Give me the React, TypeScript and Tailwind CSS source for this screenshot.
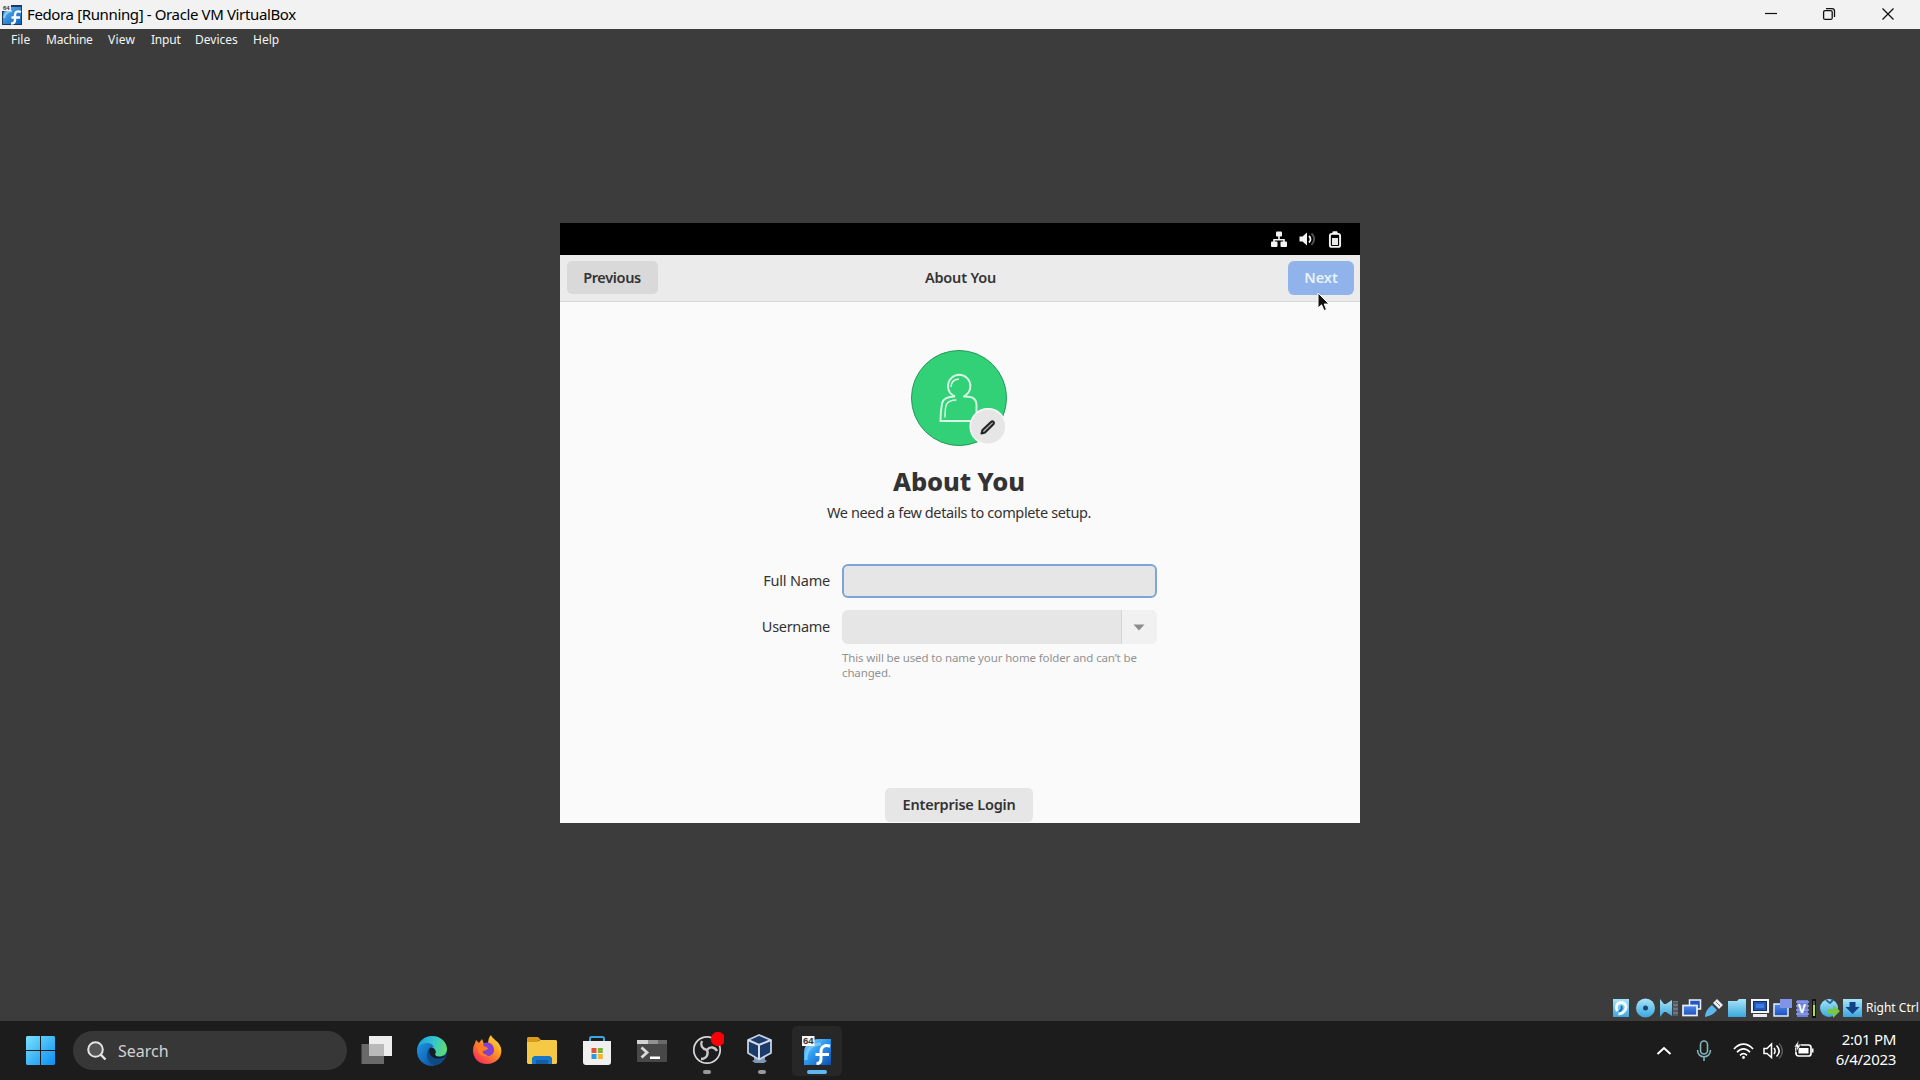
import React from 'react';

const uiFont = "font-['Noto_Sans',sans-serif]";

function FedoraIcon({ size, id }: { size: number; id: string }) {
  return (
    <svg width={size} height={size} viewBox="0 0 30 30">
      <defs>
        <linearGradient id={id} x1="0" y1="0" x2="1" y2="1">
          <stop offset="0" stopColor="#8fdcff" />
          <stop offset="0.45" stopColor="#2f9af0" />
          <stop offset="1" stopColor="#0b4fae" />
        </linearGradient>
      </defs>
      <path d="M2 29V17C2 8 9 3 17 3h12v26z" fill={`url(#${id})`} />
      <path d="M4 24C4 13 10 8 19 8" fill="none" stroke="#7fd0fc" strokeWidth="3" opacity=".75" />
      <path d="M28 10.200c-5.500-1.700-9 .5-9 5.300v7.500c0 3-1.500 4.500-4.500 4.500M13.500 18.500H27" fill="none" stroke="#fff" strokeWidth="3" />
      <rect x="0" y="0" width="12.500" height="10" fill="#f7f7f7" />
      <text x="1" y="8.300" fontSize="9.500" fontWeight="800" fontFamily="Liberation Sans, sans-serif" fill="#333">64</text>
    </svg>
  );
}

function TitleBar() {
  return (
    <header className="flex h-[29px] items-center bg-[#f2f2f2] pl-[2px] text-black">
      <svg width="20" height="20" viewBox="0 0 20 20">
        <defs>
          <linearGradient id="ttl" x1="0" y1="0" x2="1" y2="1">
            <stop offset="0" stopColor="#5fb4f0" />
            <stop offset="1" stopColor="#0d62bf" />
          </linearGradient>
        </defs>
        <rect width="20" height="20" fill="#1d3a5c" />
        <path d="M1 19v-8C1 4 6 2 12 2h7v17z" fill="url(#ttl)" />
        <path d="M2 13C3 8 6 6 10 6" fill="none" stroke="#8ed2fa" strokeWidth="2" />
        <path d="M19 7c-4-1.500-6 0-6 3v5c0 2-1.500 3.500-4 3.500M9.500 12.500H18" fill="none" stroke="#fff" strokeWidth="2.400" />
        <rect width="9" height="6" fill="#eee" />
        <text x="1" y="5.200" fontSize="6" fontWeight="800" fontFamily="Liberation Sans, sans-serif" fill="#333">64</text>
      </svg>
      <span className="mb-[2px] ml-[5px] whitespace-nowrap text-[15px] leading-[20px] tracking-[-0.370px]">Fedora [Running] - Oracle VM VirtualBox</span>
      <div className="ml-auto flex">
        <svg width="60" height="29" viewBox="0 0 60 29" stroke="#111" strokeWidth="1.200"><path d="M24 13.500h12" /></svg>
        <svg width="57" height="29" viewBox="0 0 57 29" fill="none" stroke="#111" strokeWidth="1.300">
          <rect x="22.600" y="10.600" width="8.600" height="8.800" rx="1.500" />
          <path d="M25 8.600h6a2.500 2.500 0 0 1 2.500 2.500v6" />
        </svg>
        <svg width="62" height="29" viewBox="0 0 62 29" stroke="#111" strokeWidth="1.300"><path d="m24.500 8.500 11 11m0-11-11 11" /></svg>
      </div>
    </header>
  );
}

function MenuBar() {
  return (
    <nav className="flex h-[22px] items-center gap-[15px] pl-[11px] text-[12px] leading-[16px] text-[#f4f4f4]">
      <span className="w-[20px]">File</span>
      <span className="w-[47px] tracking-[-0.200px]">Machine</span>
      <span className="w-[28px] tracking-[0.200px]">View</span>
      <span className="w-[29px] tracking-[-0.200px]">Input</span>
      <span className="w-[43px]">Devices</span>
      <span>Help</span>
    </nav>
  );
}

function GuestTopBar() {
  return (
    <div className="flex h-[32px] items-center justify-end gap-[11px] bg-black pr-[17px]">
      <svg width="17" height="17" viewBox="0 0 17 17" fill="#f4f4f4">
        <rect x="5" y="0.500" width="6" height="5" rx="1" />
        <rect x="0" y="10.500" width="6.500" height="5.500" rx="1" />
        <rect x="9.500" y="10.500" width="6.500" height="5.500" rx="1" />
        <path d="M7.200 5h1.600v3h5v3.500h-1.600v-2H3.800v2H2.200V8h5z" />
      </svg>
      <svg width="17" height="17" viewBox="0 0 17 17" fill="none">
        <path d="M0.500 5.500h3L8 1.500v13l-4.500-4h-3z" fill="#f4f4f4" />
        <path d="M10 5c2 1.800 2 4.500 0 6.500" stroke="#f4f4f4" strokeWidth="1.800" />
        <path d="M12.500 2.500c3.500 3.500 3.500 7.500 0 11.500" stroke="#555" strokeWidth="1.800" />
      </svg>
      <svg width="16" height="17" viewBox="0 0 16 17">
        <rect x="2.900" y="2.900" width="10.200" height="13" rx="2" fill="none" stroke="#f4f4f4" strokeWidth="1.900" />
        <rect x="5.500" y="0.300" width="5" height="3" rx="1" fill="#f4f4f4" />
        <rect x="5" y="7" width="6" height="7" fill="#e8e8e8" />
      </svg>
    </div>
  );
}

function GuestHeader() {
  return (
    <div className="relative grid h-[47px] grid-cols-[91px_1fr_66px] items-start border-b border-[#d8d8d8] bg-[#ebebeb] pl-[7px] pr-[6px] pt-[6px] text-[14.500px] font-semibold leading-[33px] text-[#333]">
      <button className="h-[33px] rounded-[5px] bg-[#d9d9d9] pr-[1px] tracking-[-0.350px]">Previous</button>
      <span className="pr-[25px] text-center tracking-[-0.200px]">About You</span>
      <button className="h-[34px] rounded-[6px] bg-[#8fb3ea] pb-[2px] leading-[32px] text-[#e9f1fc]">Next</button>
      <svg className="absolute left-[757px] top-[37px]" width="14" height="20" viewBox="0 0 14 20">
        <path d="M1 1v15l3.600-3.200L7 18.500l2.500-1-2.300-5.500H12z" fill="#111" stroke="#fff" strokeWidth="1" />
      </svg>
    </div>
  );
}

function Avatar() {
  return (
    <svg width="100" height="100" viewBox="0 0 100 100">
      <circle cx="50" cy="50" r="47.500" fill="#32d177" stroke="#229a58" strokeWidth="1" />
      <g fill="none" stroke="#d7f8e4" strokeWidth="1.900">
        <path d="M46 48.500C41.500 46.500 39 42.500 39 38a11.200 11.200 0 0 1 22.400 0c0 4.500-2.900 8.500-6.900 10.500 9 0 12.500 1.500 13 8V73H31.500c0-6 .5-12 1.500-17.500 1-5 5-7 13-7z" />
        <path d="M42 39c0-4.500 3-7.500 8-8M36 69.500c0-12 .5-17.500 11.500-17.500" strokeWidth="1.500" />
      </g>
      <circle cx="79" cy="78.500" r="17.800" fill="#e6e6e6" stroke="#fafafa" strokeWidth="1.500" />
      <path d="m73.500 82 8.800-8.300a1.600 1.600 0 0 1 2.300 2.200L76 84.500l-3.500 1z" fill="#b5b5b5" stroke="#252525" strokeWidth="2.100" strokeLinejoin="round" />
    </svg>
  );
}

function SetupWindow() {
  return (
    <section className="mx-auto mt-[172px] flex h-[600px] w-[800px] flex-col overflow-hidden bg-[#fafafa] text-[#333]">
      <GuestTopBar />
      <GuestHeader />
      <main className="flex flex-1 flex-col items-center pr-[2px] pt-[46px]">
        <Avatar />
        <h1 className="mb-[1px] mt-[17px] text-[25.500px] font-extrabold leading-[32px] tracking-[-0.150px]">About You</h1>
        <p className="mt-[4px] whitespace-nowrap text-[14.500px] leading-[20px] tracking-[-0.370px]">We need a few details to complete setup.</p>
        <form className="mt-[42px] grid grid-cols-[90px_315px] gap-x-[12px] pr-[21px]">
          <label className="text-right text-[14.500px] leading-[32px] tracking-[-0.200px]">Full Name</label>
          <div className="h-[34px] rounded-[6px] border-2 border-[#7da5d8] bg-[#e6e6e6]" />
          <label className="mt-[12px] text-right text-[14.500px] leading-[32px] tracking-[-0.300px]">Username</label>
          <div className="mt-[12px] flex h-[34px] overflow-hidden rounded-[6px] bg-[#e6e6e6]">
            <div className="ml-auto flex w-[36px] items-center justify-center border-l border-[#d5d5d5] bg-[#f1f1f1] pr-[1px]">
              <svg width="12" height="7" viewBox="0 0 12 7"><path d="M0.500 0.500h11L6 6.500z" fill="#8c8c8c" /></svg>
            </div>
          </div>
          <p className="col-start-2 mt-[6px] whitespace-nowrap text-[11.500px] leading-[15px] tracking-[-0.130px] text-[#929292]">This will be used to name your home folder and can’t be<br />changed.</p>
        </form>
        <button className="mb-[1px] mt-auto h-[34px] w-[148px] rounded-[5px] bg-[#e6e6e6] text-[14.500px] font-semibold tracking-[-0.200px]">Enterprise Login</button>
      </main>
    </section>
  );
}

function StatusBar() {
  return (
    <footer className="mt-auto flex h-[27px] items-center justify-end text-[12px] text-white">
      <svg width="254" height="22" viewBox="0 0 254 22">
        <defs>
          <linearGradient id="sky" x1="0" y1="0" x2="0" y2="1"><stop offset="0" stopColor="#a9e4f8" /><stop offset="1" stopColor="#3aa7df" /></linearGradient>
          <linearGradient id="blu" x1="0" y1="0" x2="0" y2="1"><stop offset="0" stopColor="#4f8ce8" /><stop offset="1" stopColor="#1c4fc0" /></linearGradient>
        </defs>
        <rect x="4" y="2" width="16" height="18" fill="url(#sky)" />
        <path d="M8.500 14C6 10 8 5.500 12 5.500c5 0 6.500 5 3.500 8.500-1.500 2-4 3-6 3" fill="none" stroke="#f4fbff" strokeWidth="2.800" />
        <path d="M12 9c1.500 1.500 1 4-2 5.500" fill="none" stroke="#1d6bc0" strokeWidth="1.900" />
        <circle cx="36.500" cy="11" r="9.500" fill="url(#sky)" /><circle cx="36.500" cy="11" r="2.500" fill="#164577" />
        <path d="M51 2l4 5h2l6-4v16l-6-4h-2l-4 5z" fill="url(#sky)" />
        <path d="M64 4h5v15h-5z" fill="#6b7880" /><path d="M63 6h6m-6 4h6m-6 4h6m-6 4h6" stroke="#48525a" strokeWidth="1.300" />
        <rect x="80.500" y="3" width="11" height="9" fill="#2457bd" stroke="#e9f0fb" strokeWidth="1.500" />
        <rect x="74" y="8.500" width="14" height="10" fill="url(#blu)" stroke="#e9f0fb" strokeWidth="1.700" />
        <path d="M96 20c0-5 3-9 7-12l5 5c-3 4-7 6-12 7z" fill="#5cb7ee" /><path d="M104 6l4-4 6 6-4 4z" fill="#e8eef2" /><path d="M107 5l4 4" stroke="#777" />
        <path d="M119 4h9l2-2h7v18h-18z" fill="url(#sky)" />
        <rect x="142" y="2" width="18" height="14" fill="#f3f6fb" /><rect x="144.500" y="4.500" width="13" height="9" fill="#2459b9" stroke="#102c67" /><path d="M147 7h8v4h-8z" fill="#3d7ddc" /><path d="M144 17h14v3h-14z" fill="#e8edf3" />
        <rect x="165" y="7" width="14" height="12" fill="url(#blu)" stroke="#e3ecfb" strokeWidth="1.500" /><rect x="171" y="2" width="12" height="9" fill="#8095e8" />
        <path d="M188 3h11v17h-11z" fill="#6c7fd5" /><path d="M187 5h13m-13 4h13m-13 4h13m-13 4h13" stroke="#8c9ce9" strokeWidth="1.500" /><text x="189" y="15.500" fontSize="12" fontWeight="700" fontFamily="Noto Sans, sans-serif" fill="white">V</text>
        <rect x="203" y="2" width="4" height="19" fill="#111" /><path d="M204 8h2v11h-2z" fill="#b4df35" /><path d="M204 4h2v4h-2z" fill="#555" />
        <circle cx="220" cy="11" r="9" fill="url(#sky)" /><path d="M217 3l4 3 3-3" stroke="#26679b" strokeWidth="2" fill="none" /><path d="M219 12h5V8l7 6-7 7v-4h-5z" fill="#75c944" />
        <rect x="234" y="2" width="19" height="18" fill="url(#sky)" />
        <path d="M240.500 5h6v5h4l-7 7-7-7h4z" fill="#123f86" />
      </svg>
      <span className="ml-[3px] w-[54px] whitespace-nowrap">Right Ctrl</span>
    </footer>
  );
}

function AppSlot({ children, mark = '' }: { children: React.ReactNode; mark?: string }) {
  return (
    <div className="relative flex h-[59px] w-[55px] shrink-0 items-center justify-center">
      {children}
      {mark === 'idle' && <span className="absolute bottom-[6px] left-[24px] h-[4px] w-[8px] rounded-full bg-[#999]" />}
      {mark === 'active' && <span className="absolute bottom-[6px] left-[17px] h-[4px] w-[20px] rounded-full bg-[#5bb9f0]" />}
    </div>
  );
}

function Taskbar() {
  return (
    <footer className="flex h-[59px] items-center bg-[#1c1c1c] pl-[26px]">
      <svg width="29" height="29" viewBox="0 0 29 29">
        <defs><linearGradient id="win" x1="0" y1="0" x2="1" y2="1"><stop offset="0" stopColor="#79e2fd" /><stop offset="1" stopColor="#0b8df2" /></linearGradient></defs>
        <path d="M1 0h13v14H0V1zM15 0h13l1 1v13H15zM0 15h14v14H1l-1-1zM15 15h14v13l-1 1H15z" fill="url(#win)" />
      </svg>
      <div className="ml-[18px] mr-[2px] flex h-[39px] w-[274px] items-center rounded-full bg-[#373737] pl-[14px] text-[16px] text-[#d2d2d2]">
        <svg width="20" height="20" viewBox="0 0 20 20" fill="none" stroke="#e4e4e4" strokeWidth="2"><circle cx="8.500" cy="8.500" r="7.300" fill="#555" /><path d="m13.700 13.700 4.800 4.800" strokeWidth="2.400" /></svg>
        <span className="ml-[11px]">Search</span>
      </div>

      <AppSlot>
        <svg className="-mt-[1px]" width="31" height="29" viewBox="0 0 31 29"><path d="M8 0h23v20H8z" fill="#ededed" /><path d="M0.500 8h22.500v20H0.500z" fill="#777" opacity=".85" /><path d="M8 8h15v12H8z" fill="#b9b9b9" /></svg>
      </AppSlot>
      <AppSlot>
        <svg width="30" height="30" viewBox="0 0 30 30">
          <defs>
            <linearGradient id="edgeTop" x1="0" y1="0.300" x2="1" y2="0.500"><stop offset="0" stopColor="#1aa0e0" /><stop offset=".55" stopColor="#35c6cc" /><stop offset="1" stopColor="#62dc6c" /></linearGradient>
            <linearGradient id="edgeLow" x1="0" y1="0" x2="1" y2="1"><stop offset="0" stopColor="#1e97e4" /><stop offset="1" stopColor="#0c4d9c" /></linearGradient>
          </defs>
          <circle cx="15" cy="15" r="15" fill="#104a86" />
          <path d="M0 14C1 5 8 0 15 0c9 0 15 6.500 15 13 0 5-4 7.500-8 7.500-3 0-5-1.500-4-3 2-3-1-6.500-5-6.500-6 0-11 3-13 3z" fill="url(#edgeTop)" />
          <path d="M0 15c0-5 5-8 10-8 4 0 6 2 7 4-4-1-7 3-7 8 0 6 4 10 8 10.700C8 31.500 0 24 0 15z" fill="url(#edgeLow)" />
          <path d="M13 12c-1.500 3-.5 7 2.500 9s8 2 12 .200l1.500-2.200c-3 2-9 2.500-10.500.5-1-1.300.5-2 .2-4-.4-2-3-4.500-5.700-3.500z" fill="#141c26" />
        </svg>
      </AppSlot>
      <AppSlot>
        <svg className="-mt-[1px]" width="30" height="30" viewBox="0 0 30 30">
          <defs><linearGradient id="fox" x1="1" y1="0" x2="0.200" y2="1"><stop offset="0" stopColor="#fff04a" /><stop offset=".45" stopColor="#ff9a22" /><stop offset="1" stopColor="#f4285c" /></linearGradient></defs>
          <path d="M19 0c1 4 8 6 10 13 2 9-5 16-14 16S1 23 1 15c0-4 2-6 3-10l3 3 3-4 2 5h4c0-4 1-7 3-9z" fill="url(#fox)" />
          <path d="M12 8c5-2 10 1 10 7 0 4-3 6-7 6s-6-3-5-6c2 1 5 0 5-1l-4-2c0-2 0-3 1-4z" fill="#8240d0" />
          <path d="M5 9c3-1 5 0 7 2l4 2c0 2-4 2-5 3s1 4 5 4c-4 3-9 0-10-4-1-3-1-5-1-7z" fill="#ff7c25" />
        </svg>
      </AppSlot>
      <AppSlot>
        <svg width="30" height="28" viewBox="0 0 30 28">
          <path d="M1 0h10l3 3h-2l-2 3H0V1z" fill="#dc9a1c" /><path d="M0 5h10l3-2h16l1 1v22l-1 1H1l-1-1z" fill="#f5c945" />
          <path d="M5 27v-6l2-2h16l2 2v6z" fill="#1a77c8" /><path d="M9 23h12v4H9z" fill="#155da6" />
        </svg>
      </AppSlot>
      <AppSlot>
        <svg width="30" height="30" viewBox="0 0 30 30">
          <path d="M8 6V2.500Q8 1 9.500 1h11Q22 1 22 2.500V6" fill="none" stroke="#3aa6e4" strokeWidth="2" />
          <path d="M1 5h28v21a3 3 0 0 1-3 3H4a3 3 0 0 1-3-3z" fill="#f0f0f0" />
          <path d="M9.500 12h5v5h-5z" fill="#e8512d" /><path d="M15.800 12h5v5h-5z" fill="#7fb52c" /><path d="M9.500 18h5v5h-5z" fill="#2a9be0" /><path d="M15.800 18h5v5h-5z" fill="#f6b52a" />
        </svg>
      </AppSlot>
      <AppSlot>
        <svg width="30" height="22" viewBox="0 0 30 22">
          <path d="M0 1q0-1 1-1h28q1 0 1 1v20q0 1-1 1H1q-1 0-1-1z" fill="#484848" /><path d="M0 0h11v4H0z" fill="#d2d2d2" /><path d="M11 0h10v4H11z" fill="#919191" /><path d="M21 0h9v4h-9z" fill="#696969" />
          <path d="m4.500 7.500 5.500 5-5.500 5" fill="none" stroke="#d9d9d9" strokeWidth="2.800" /><path d="M13 16.500h10v2.500H13z" fill="#fff" />
        </svg>
      </AppSlot>
      <AppSlot mark="idle">
        <svg className="-mt-[4px]" width="34" height="34" viewBox="0 0 34 34">
          <circle cx="17" cy="18" r="13.200" fill="#1d1d1f" stroke="#d8d8d8" strokeWidth="1.700" />
          <g fill="none" stroke="#c9c9c9" strokeWidth="2.300">
            <path d="M17 18c-5-1-7-5-5-9" /><path d="M17 18c3-4 8-3 10 1" /><path d="M17 18c2 5-1 9-6 9" />
          </g>
          <circle cx="28" cy="7" r="7.200" fill="#fb0007" />
        </svg>
      </AppSlot>
      <AppSlot mark="idle">
        <svg className="-mt-[3px] mr-[3px]" width="28" height="30" viewBox="0 0 28 30">
          <path d="M8 23h11v3l2 1-3 2H9l-3-2 2-1z" fill="#7f96b4" />
          <path d="M13 1 25 6v13l-12 6.500L2 19V6z" fill="#1d3b68" stroke="#c3d2e6" strokeWidth="1.800" strokeLinejoin="round" />
          <path d="M2 6l11 5L25 6M13 11v14" fill="none" stroke="#d3deed" strokeWidth="2" />
        </svg>
      </AppSlot>
      <div className="ml-[3px] rounded-[5px] bg-[#272727]">
        <div className="flex h-[50px] w-[50px] items-center justify-center">
          <AppSlot mark="active"><FedoraIcon size={30} id="fedTask" /></AppSlot>
        </div>
      </div>

      <div className="ml-auto flex items-center pr-[24px]">
        <svg width="16" height="10" viewBox="0 0 16 10" fill="none" stroke="#fff" strokeWidth="2"><path d="m1.500 8 6.500-6 6.500 6" /></svg>
        <svg className="ml-[24px]" width="16" height="22" viewBox="0 0 16 22" fill="none" stroke="#83b4bb" strokeWidth="1.600"><rect x="4.500" y="1" width="7" height="13" rx="3.500" /><path d="M1.500 10c0 9 13 9 13 0M8 16.500V21" /></svg>
        <svg className="ml-[21px]" width="21" height="18" viewBox="0 0 21 18" fill="none" stroke="#fff" strokeWidth="1.700"><path d="M1 7c5.500-6.500 13.500-6.500 19 0M4 10.300c4-4.500 9-4.500 13 0M7 13.300c2.500-2.500 4.500-2.500 7 0" /><circle cx="10.500" cy="15.500" r="1.400" fill="#fff" stroke="none" /></svg>
        <svg className="ml-[9px]" width="20" height="18" viewBox="0 0 20 18" fill="none" stroke="#fff" strokeWidth="1.500"><path d="M1 6.500h3L8.500 2v13.500L4 11.500H1z" /><path d="M11 6c1.500 2 1.500 4 0 6M13.500 3.500c3.500 3.500 3.500 7.500 0 11" /><path d="M16 1.500c4.500 4.500 4.500 10.500 0 15" stroke="#555" /></svg>
        <svg className="-mt-[3px] ml-[11px]" width="21" height="18" viewBox="0 0 21 18"><rect x="2" y="5" width="15" height="11" rx="2.500" fill="none" stroke="#fff" strokeWidth="1.700" /><path d="M4.500 8h10v5.500h-10zM18 8.500h1.500v4H18z" fill="#fff" /><path d="M5 0 0 7h3l-1 5 5-7H4z" fill="#fff" stroke="#1c1c1c" strokeWidth=".6" /></svg>
        <div className="mb-[3px] ml-[17px] w-[64px] whitespace-nowrap text-right text-[15px] leading-[20px] tracking-[-0.300px] text-white">
          <div>2:01 PM</div><div>6/4/2023</div>
        </div>
      </div>
    </footer>
  );
}

export default function App() {
  return (
    <div className={`flex h-[1080px] w-[1920px] flex-col overflow-hidden bg-[#3b3c3b] ${uiFont}`}>
      <TitleBar />
      <MenuBar />
      <SetupWindow />
      <StatusBar />
      <Taskbar />
    </div>
  );
}
